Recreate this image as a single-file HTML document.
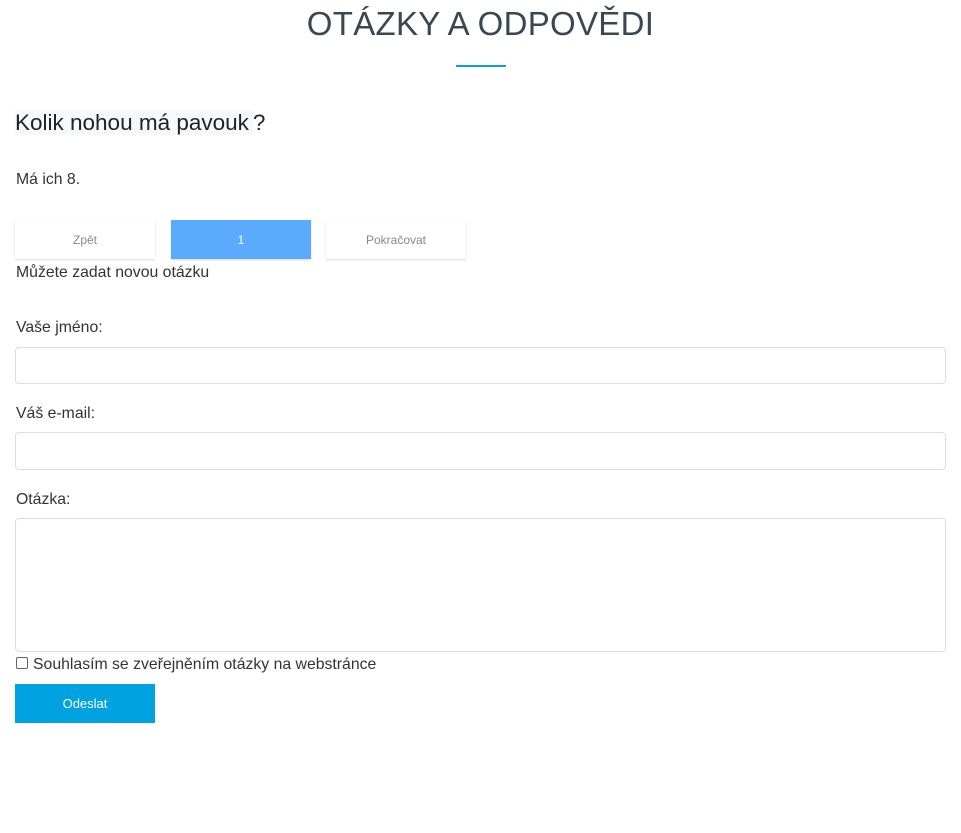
<!DOCTYPE html>
<html><head><meta charset="utf-8"><style>
body{margin:0;background:#fff;font-family:"Liberation Sans",sans-serif;color:#333;}
.abs{position:absolute}
h1{position:absolute;left:0;width:961px;top:5px;margin:0;text-align:center;font-weight:300;font-size:33px;color:#3a4750;letter-spacing:0.3px}
.line{left:456px;top:65px;width:50px;height:2px;background:#0aa0dc}
.q{left:15px;top:107px;height:30px;line-height:32px;font-size:22.5px;color:#222}
.q span{background:#f7f8f9;padding-right:4px}
.t{font-size:15.8px;color:#333}
.btn{top:220px;width:140px;height:39px;line-height:40px;text-align:center;font-size:12px;box-shadow:0 1px 2px rgba(0,0,0,.15);color:#888}
.inp{left:15px;width:929px;border:1px solid #ddd;border-radius:4px}
</style></head><body>
<h1>OTÁZKY A ODPOVĚDI</h1>
<div class="abs line"></div>
<div class="abs q"><span>Kolik nohou má pavouk</span>?</div>
<div class="abs t" style="left:16px;top:171px">Má ich 8.</div>
<div class="abs btn" style="left:15px;background:#fff">Zpět</div>
<div class="abs btn" style="left:171px;background:#5aabfd;color:#fff">1</div>
<div class="abs btn" style="left:326px;background:#fff">Pokračovat</div>
<div class="abs t" style="left:16px;top:264px">Můžete zadat novou otázku</div>
<div class="abs t" style="left:16px;top:319px">Vaše jméno:</div>
<div class="abs inp" style="top:347px;height:35px"></div>
<div class="abs t" style="left:16px;top:405px">Váš e-mail:</div>
<div class="abs inp" style="top:432px;height:36px"></div>
<div class="abs t" style="left:16px;top:491px">Otázka:</div>
<div class="abs inp" style="top:518px;height:132px"></div>
<div class="abs" style="left:16px;top:657px;width:10px;height:10px;border:1px solid #666;border-radius:2px"></div>
<div class="abs t" style="left:33px;top:656px">Souhlasím se zveřejněním otázky na webstránce</div>
<div class="abs" style="left:15px;top:684px;width:140px;height:39px;line-height:40px;background:#00a3e0;color:#fff;text-align:center;font-size:13px">Odeslat</div>
</body></html>
